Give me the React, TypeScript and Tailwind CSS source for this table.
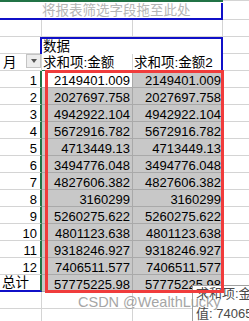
import React from "react";

const rows: [string, string][] = [
  ["1", "2149401.009"],
  ["2", "2027697.758"],
  ["3", "4942922.104"],
  ["4", "5672916.782"],
  ["5", "4713449.13"],
  ["6", "3494776.048"],
  ["7", "4827606.382"],
  ["8", "3160299"],
  ["9", "5260275.622"],
  ["10", "4801123.638"],
  ["11", "9318246.927"],
  ["12", "7406511.577"],
];

function DataRow({ label, value, first, total }: { label: string; value: string; first?: boolean; total?: boolean }) {
  return (
    <div className="flex h-[17px]">
      <div
        className={
          total
            ? "flex w-[42px] items-end justify-start border-b-2 border-r-2 border-b-[#1010c8] border-r-[#217346] pl-[2px] text-[13.5px] leading-[14px]"
            : "flex w-[42px] items-end justify-end border-b border-r-2 border-b-[#d4d4d4] border-r-[#217346] pr-[3px] text-[13px] leading-[12px]"
        }
      >
        {label}
      </div>
      <div
        className={
          first
            ? "flex w-[91px] items-end justify-end border-b border-r border-[#a9a9a9] bg-white pr-[2px] text-[13px] leading-[12px]"
            : "flex w-[91px] items-end justify-end border-b border-r border-[#a9a9a9] bg-[#c8c8c8] pr-[2px] text-[13px] leading-[12px]"
        }
      >
        {value}
      </div>
      <div className="flex w-[90px] items-end justify-end border-b border-r border-[#a9a9a9] bg-[#c8c8c8] pr-[1px] text-[13px] leading-[12px]">
        {value}
      </div>
      <div className="flex-1 border-b border-[#d4d4d4]" />
    </div>
  );
}

function EmptyRow() {
  return (
    <div className="flex h-[17px]">
      <div className="w-[42px] border-b border-r border-[#d4d4d4]" />
      <div className="w-[91px] border-b border-r border-[#d4d4d4]" />
      <div className="w-[90px] border-b border-r border-[#d4d4d4]" />
      <div className="flex-1 border-b border-[#d4d4d4]" />
    </div>
  );
}

export default function App() {
  return (
    <div className="relative h-[321px] w-[249px] overflow-hidden bg-white font-['Liberation_Sans','Noto_Sans_CJK_SC',sans-serif] text-black">
      {/* top strip */}
      <div className="flex h-[3px]">
        <div className="w-[223px] border-t-2 border-[#217346]" />
        <div className="flex-1 border-t border-[#d4d4d4]" />
      </div>

      {/* filter row */}
      <div className="flex h-[17px]">
        <div className="flex w-[223px] items-end border-b-2 border-r-2 border-[#1010c8] pl-[42px] text-[13.5px] leading-[15px] text-[#b5b5b5]">
          将报表筛选字段拖至此处
        </div>
        <div className="flex-1 border-b border-[#d4d4d4]" />
      </div>

      {/* empty row */}
      <div className="flex h-[17px]">
        <div className="w-[42px] border-b border-r border-[#d4d4d4]" />
        <div className="w-[91px] border-b border-r border-[#d4d4d4]" />
        <div className="w-[90px] border-b border-r border-[#d4d4d4]" />
        <div className="flex-1 border-b border-[#d4d4d4]" />
      </div>

      {/* 数据 row */}
      <div className="flex h-[17px]">
        <div className="w-[40px] border-b border-[#d4d4d4]" />
        <div className="flex w-[183px] items-end border-l-2 border-r-2 border-t-2 border-[#1010c8] pl-[1px] text-[13.5px] leading-[14px]">
          数据
        </div>
        <div className="flex-1 border-b border-[#d4d4d4]" />
      </div>

      {/* header row */}
      <div className="flex h-[17px]">
        <div className="flex w-[42px] items-end justify-between border-b border-r border-[#d4d4d4]">
          <span className="pl-[3px] text-[13.5px] leading-[14px]">月</span>
          <span className="mb-[2px] flex h-[14px] w-[15px] items-center justify-center border border-[#c4c4c4] bg-[#ededed]">
            <span className="h-0 w-0 border-l-[3px] border-r-[3px] border-t-[4px] border-l-transparent border-r-transparent border-t-[#555555]" />
          </span>
        </div>
        <div className="flex w-[91px] items-end border-b border-r border-b-[#217346] border-r-[#d4d4d4] pl-[1px] text-[13.5px] leading-[14px]">
          求和项:金额
        </div>
        <div className="flex w-[90px] items-end border-b border-r-2 border-b-[#217346] border-r-[#1010c8] pl-[1px] text-[13.5px] leading-[14px]">
          求和项:金额2
        </div>
        <div className="flex-1 border-b border-[#d4d4d4]" />
      </div>

      {rows.map(([l, v], i) => (
        <DataRow key={l} label={l} value={v} first={i === 0} />
      ))}
      <DataRow label="总计" value="57775225.98" total />
      <EmptyRow />
      <EmptyRow />

      {/* tooltip */}
      <div className="absolute left-[192px] top-[285px] h-[50px] w-[80px] border border-[#a0a0a0] bg-white pl-[3px] text-[13px] leading-[20px] text-[#4a4a4a]">
        <div className="-mt-[2px] whitespace-nowrap">求和项:金额</div>
        <div className="whitespace-nowrap">值: 7406511.577</div>
      </div>

      {/* red annotation box */}
      <div className="absolute left-[45px] top-[70px] h-[223px] w-[179px] border-[3px] border-[#f03c3c]" />

      {/* watermark */}
      <div className="absolute left-[78px] top-[294px] whitespace-nowrap text-[14.5px] leading-[16px] text-[#9c9c9c] opacity-90">
        CSDN @WealthLucky
      </div>
    </div>
  );
}
